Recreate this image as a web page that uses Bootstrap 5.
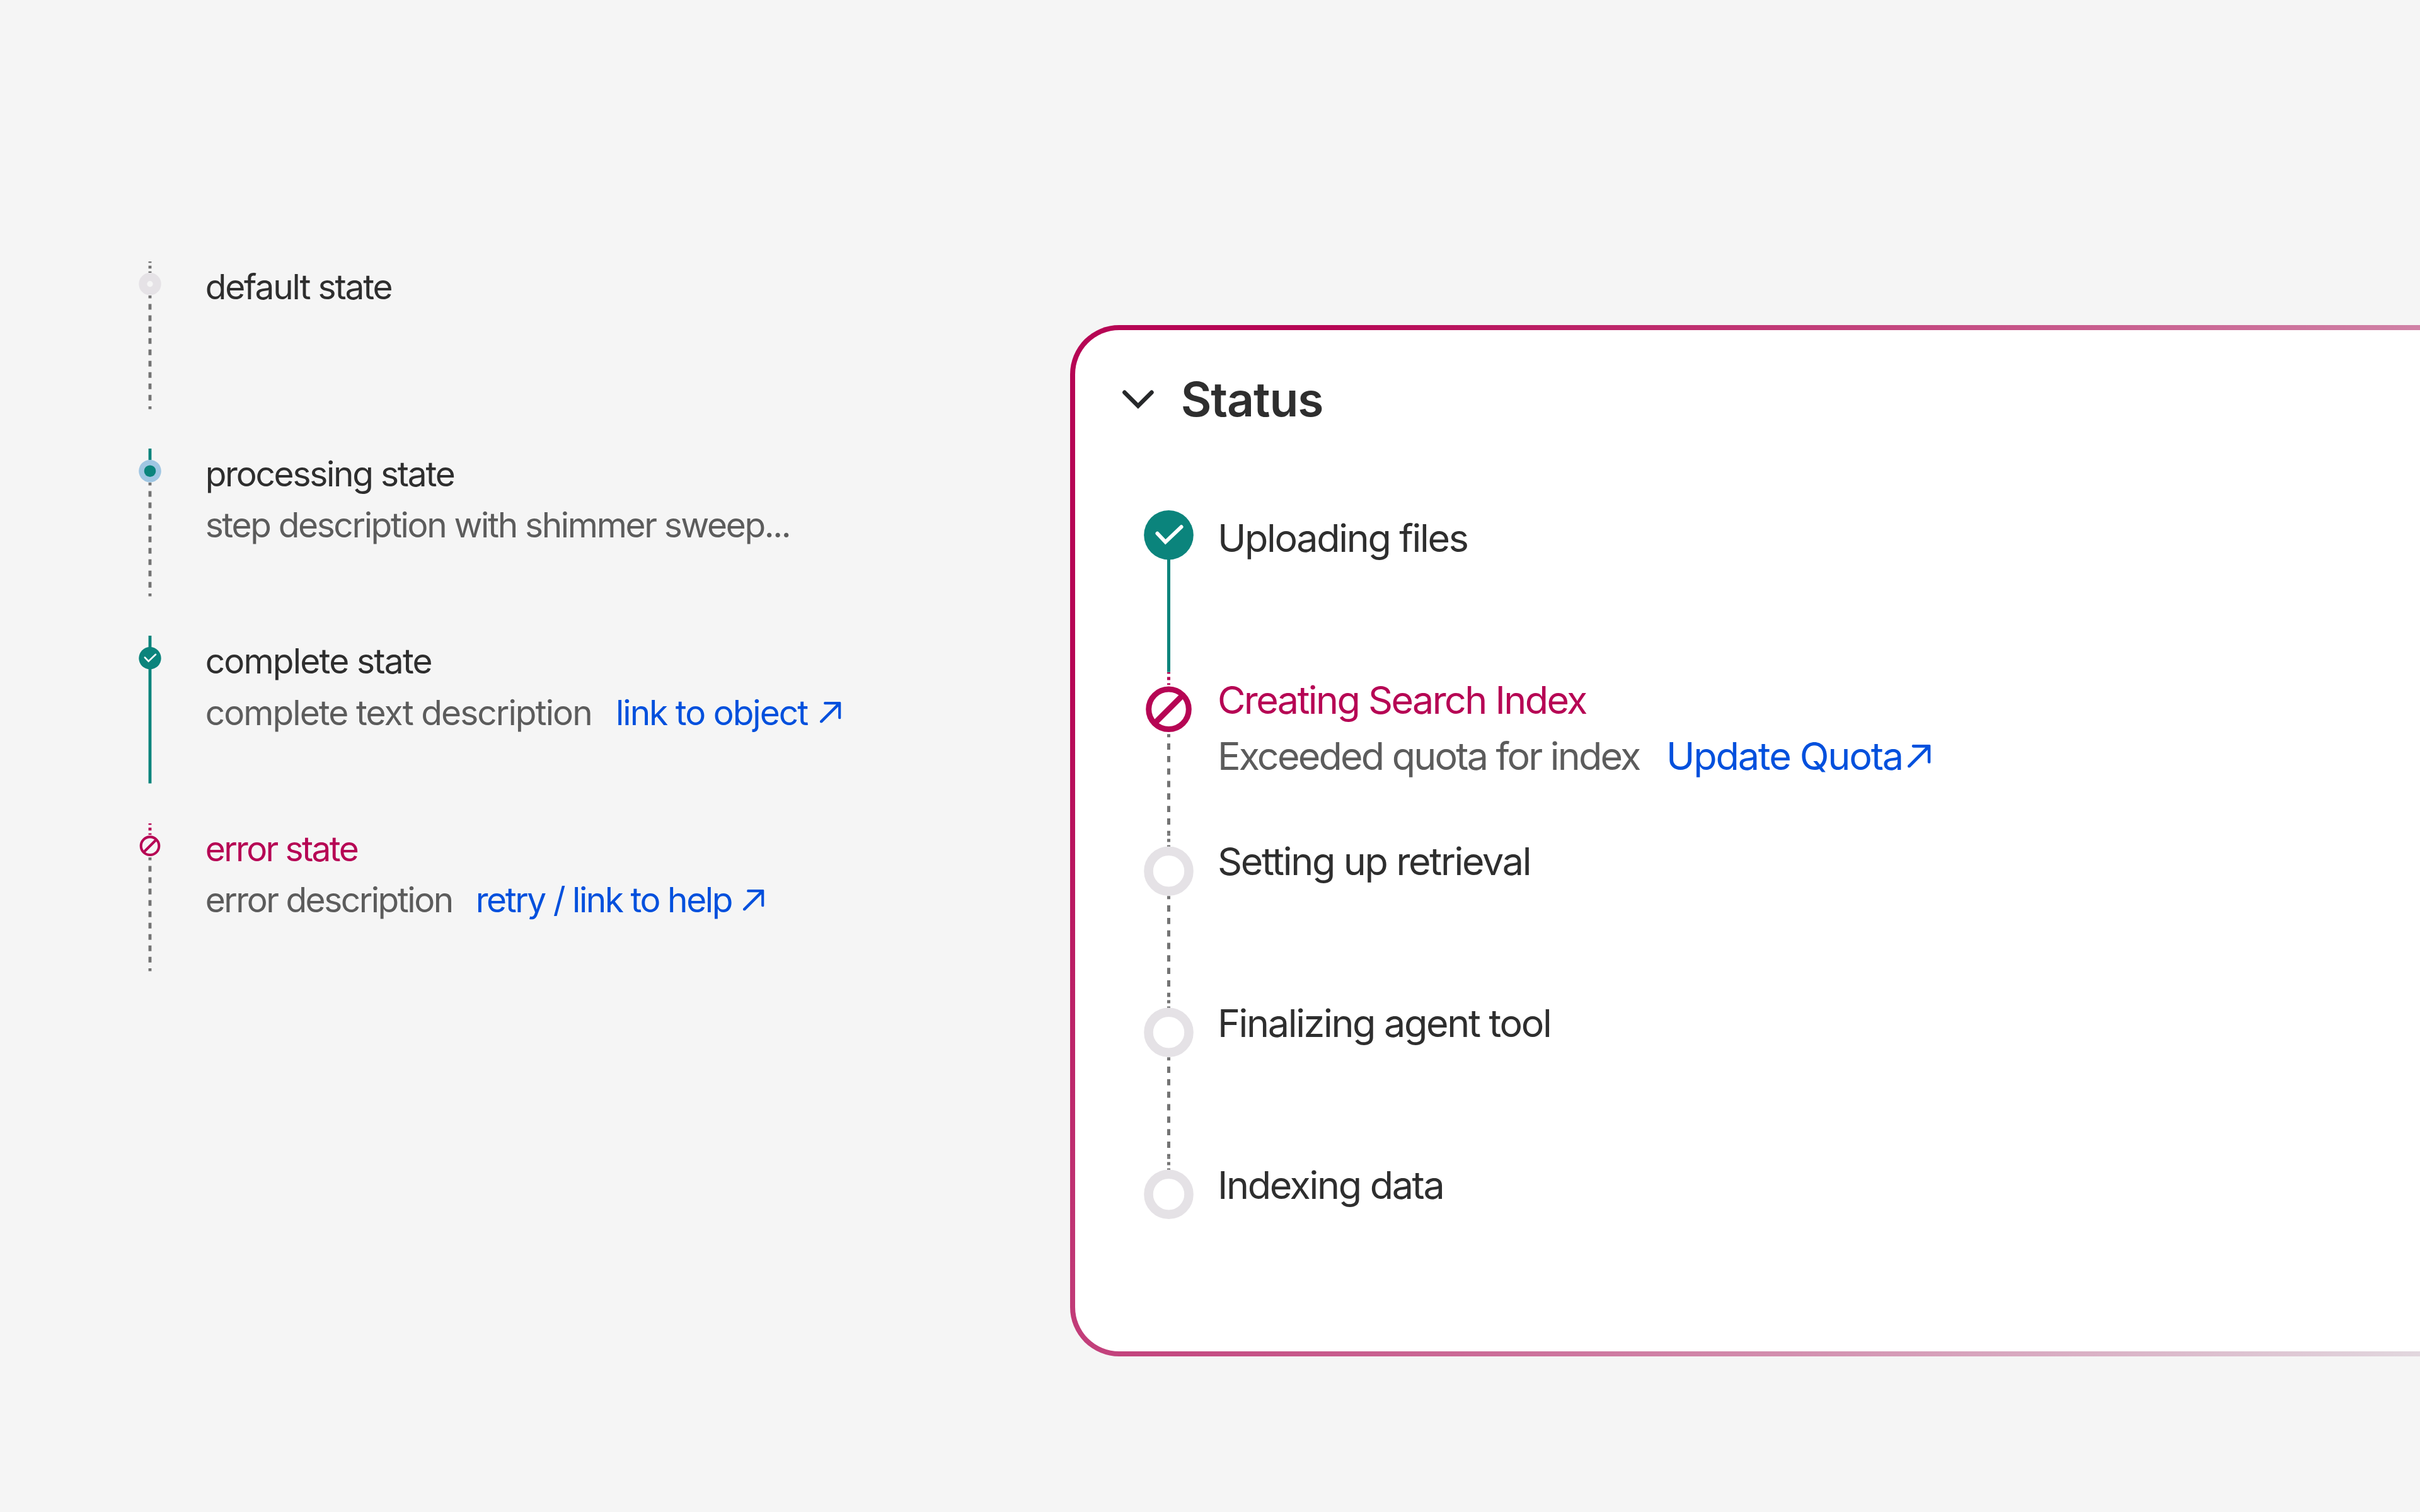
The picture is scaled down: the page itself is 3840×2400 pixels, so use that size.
<!DOCTYPE html>
<html lang="en">
<head>
<meta charset="utf-8">
<meta name="viewport" content="width=device-width, initial-scale=1">
<title>Stepper states</title>
<link href="https://cdn.jsdelivr.net/npm/bootstrap@5.3.0/dist/css/bootstrap.min.css" rel="stylesheet">
<style>
  :root { --ink:#2e2e2e; --muted:#5c5c5c; --link:#0250dd; --error:#b60554; }
  body { background:#f5f5f5; color:var(--ink); font-family:Inter,"Liberation Sans",sans-serif; width:3840px; height:2400px; overflow:hidden; }
  .legend { width:1697.7px; padding:414.7px 0 0 219.6px; gap:62.8px; }
  .legend .step-item { height:234.5px; gap:70.1px; font-size:55px; line-height:81.3px; letter-spacing:-2.17px; }
  .status-card { height:1637.2px; margin-top:515.5px; border:8px solid transparent; border-right:0; border-radius:78px 0 0 78px;
    background:linear-gradient(#fff,#fff) padding-box, linear-gradient(126.2deg,#b60554 324px,#e4e3e6 2830px) border-box; }
  .status-card .card-body { padding:65px 75px; color:var(--ink); }
  .status-head { gap:43px; height:90px; }
  .status-title { font-size:75px; line-height:90px; font-weight:600; letter-spacing:-1.1px; }
  .status-steps { margin:131.5px 0 0 34.6px; }
  .status-steps .step-item { height:256.8px; gap:37.6px; font-size:61px; line-height:89.4px; letter-spacing:-2.32px; }
  .status-steps .step-text { margin-top:-.3px; }
  svg { display:block; flex:none; overflow:visible; }
  .step-text { white-space:nowrap; }
  .desc { color:var(--muted); }
  .step-link, .step-link:hover { color:var(--link); text-decoration:none; }
  .is-error { color:var(--error); }
  .t-processing { letter-spacing:-2.24px; } .t-sweep { letter-spacing:-2.35px; }
  .t-complete { letter-spacing:-1.8px; }
  .d-complete { width:651.3px; letter-spacing:-1.92px; } .l-object { width:324px; letter-spacing:-2px; }
  .t-failed { letter-spacing:-2.62px; }
  .d-error { width:429px; letter-spacing:-2.48px; } .l-help { width:424.6px; letter-spacing:-2.46px; }
  .t-creating { letter-spacing:-2.58px; }
  .d-quota { width:712px; letter-spacing:-2.8px; } .l-quota { width:382.7px; letter-spacing:-2.09px; }
</style>
</head>
<body>
<svg width="0" height="0" class="position-absolute" aria-hidden="true">
  <defs>
    <symbol id="check" viewBox="-40 -40 80 80"><circle r="39.3" fill="#0b847c"/><path d="M-18-2.5-5.2 11 20-13" fill="none" stroke="#fff" stroke-width="6" stroke-linecap="round"/></symbol>
    <symbol id="ban" viewBox="-40 -40 80 80"><circle r="31.8" fill="none" stroke="#b60554" stroke-width="9"/><path d="M-20 20 20-20" stroke="#b60554" stroke-width="9"/></symbol>
    <symbol id="arrow" viewBox="0 0 36 36"><path d="M2.3 33.7 33.7 2.3M9 2.3H33.7V27" fill="none" stroke="#0250dd" stroke-width="4.8" stroke-linecap="round" stroke-linejoin="round"/></symbol>
  </defs>
</svg>
<main class="d-flex h-100">
  <section class="legend d-flex flex-column flex-shrink-0">
    <div class="step-item d-flex flex-shrink-0">
      <svg width="36" height="234.5"><g stroke-width="4.8" stroke="#737373"><path d="M18 0V18" stroke-dasharray="4.5" stroke-dashoffset="2.25"/><path d="M18 54V234.5" stroke-dasharray="9.02" stroke-dashoffset="4.51"/></g><circle cx="18" cy="35.7" r="11.2" fill="none" stroke="#e5e2e6" stroke-width="13"/></svg>
      <div class="step-text"><div>default state</div></div>
    </div>
    <div class="step-item d-flex flex-shrink-0">
      <svg width="36" height="234.5"><path d="M18 0V18" stroke="#0b847c" stroke-width="4.8"/><path d="M18 54V234.5" stroke="#737373" stroke-width="4.8" stroke-dasharray="9.02" stroke-dashoffset="4.51"/><circle cx="18" cy="35.7" r="17.8" fill="#9fc6e2"/><circle cx="18" cy="35.7" r="9.3" fill="#0b847c"/></svg>
      <div class="step-text"><div class="t-processing">processing state</div><div class="desc t-sweep">step description with shimmer sweep...</div></div>
    </div>
    <div class="step-item d-flex flex-shrink-0">
      <svg width="36" height="234.5"><path d="M18 0V234.5" stroke="#0b847c" stroke-width="4.8"/><use href="#check" x="0" y="17.7" width="36" height="36"/></svg>
      <div class="step-text"><div class="t-complete">complete state</div>
        <div class="d-flex align-items-center"><span class="desc d-complete">complete text description</span><a href="#" class="step-link d-flex align-items-center"><span class="l-object">link to object</span><svg width="33.5" height="33.5"><use href="#arrow" width="33.5" height="33.5"/></svg></a></div></div>
    </div>
    <div class="step-item d-flex flex-shrink-0">
      <svg width="36" height="234.5"><g stroke-width="4.8"><path d="M18 0V18" stroke="#b60554" stroke-dasharray="4.5" stroke-dashoffset="2.25"/><path d="M18 54V234.5" stroke="#737373" stroke-dasharray="9.02" stroke-dashoffset="4.51"/></g><use href="#ban" x="0" y="17.7" width="36" height="36"/></svg>
      <div class="step-text"><div class="is-error t-failed">error state</div>
        <div class="d-flex align-items-center"><span class="desc d-error">error description</span><a href="#" class="step-link d-flex align-items-center"><span class="l-help">retry / link to help</span><svg width="33.5" height="33.5"><use href="#arrow" width="33.5" height="33.5"/></svg></a></div></div>
    </div>
  </section>

  <section class="status-card card flex-grow-1">
    <div class="card-body">
      <div class="status-head d-flex align-items-center">
        <svg width="50" height="30"><path d="M3.4 3.8 24.9 25.3 46.4 3.8" fill="none" stroke="#26282a" stroke-width="6.6" stroke-linecap="round"/></svg>
        <h1 class="status-title m-0">Status</h1>
      </div>
      <div class="status-steps d-flex flex-column">
        <div class="step-item d-flex">
          <svg width="79" height="256.8"><path d="M39.5 40V256.8" stroke="#0b847c" stroke-width="5"/><use href="#check" x="-.5" y="-.7" width="80" height="80"/></svg>
          <div class="step-text">Uploading files</div>
        </div>
        <div class="step-item d-flex">
          <svg width="79" height="256.8"><path d="M39.5 0V20" stroke="#b60554" stroke-width="5" stroke-dasharray="5" stroke-dashoffset="2.5"/><path d="M39.5 98.2V256.8" stroke="#737373" stroke-width="5" stroke-dasharray="9.91" stroke-dashoffset="4.95"/><use href="#ban" x="-.5" y="18.8" width="80" height="80"/></svg>
          <div class="step-text"><div class="is-error t-creating">Creating Search Index</div>
            <div class="d-flex align-items-center"><span class="desc d-quota">Exceeded quota for index</span><a href="#" class="step-link d-flex align-items-center"><span class="l-quota">Update Quota</span><svg width="36.5" height="36.5"><use href="#arrow" width="36.5" height="36.5"/></svg></a></div></div>
        </div>
        <div class="step-item d-flex">
          <svg width="79" height="256.8"><g stroke="#737373" stroke-width="5"><path d="M39.5 0V20" stroke-dasharray="5" stroke-dashoffset="2.5"/><path d="M39.5 98.2V256.8" stroke-dasharray="9.91" stroke-dashoffset="4.95"/></g><circle cx="39.5" cy="58.8" r="32" fill="none" stroke="#e5e2e6" stroke-width="14.6"/></svg>
          <div class="step-text">Setting up retrieval</div>
        </div>
        <div class="step-item d-flex">
          <svg width="79" height="256.8"><g stroke="#737373" stroke-width="5"><path d="M39.5 0V20" stroke-dasharray="5" stroke-dashoffset="2.5"/><path d="M39.5 98.2V256.8" stroke-dasharray="9.91" stroke-dashoffset="4.95"/></g><circle cx="39.5" cy="58.8" r="32" fill="none" stroke="#e5e2e6" stroke-width="14.6"/></svg>
          <div class="step-text">Finalizing agent tool</div>
        </div>
        <div class="step-item d-flex">
          <svg width="79" height="256.8"><path d="M39.5 0V20" stroke="#737373" stroke-width="5" stroke-dasharray="5" stroke-dashoffset="2.5"/><circle cx="39.5" cy="58.8" r="32" fill="none" stroke="#e5e2e6" stroke-width="14.6"/></svg>
          <div class="step-text">Indexing data</div>
        </div>
      </div>
    </div>
  </section>
</main>
<script src="https://cdn.jsdelivr.net/npm/bootstrap@5.3.0/dist/js/bootstrap.bundle.min.js"></script>
</body>
</html>
